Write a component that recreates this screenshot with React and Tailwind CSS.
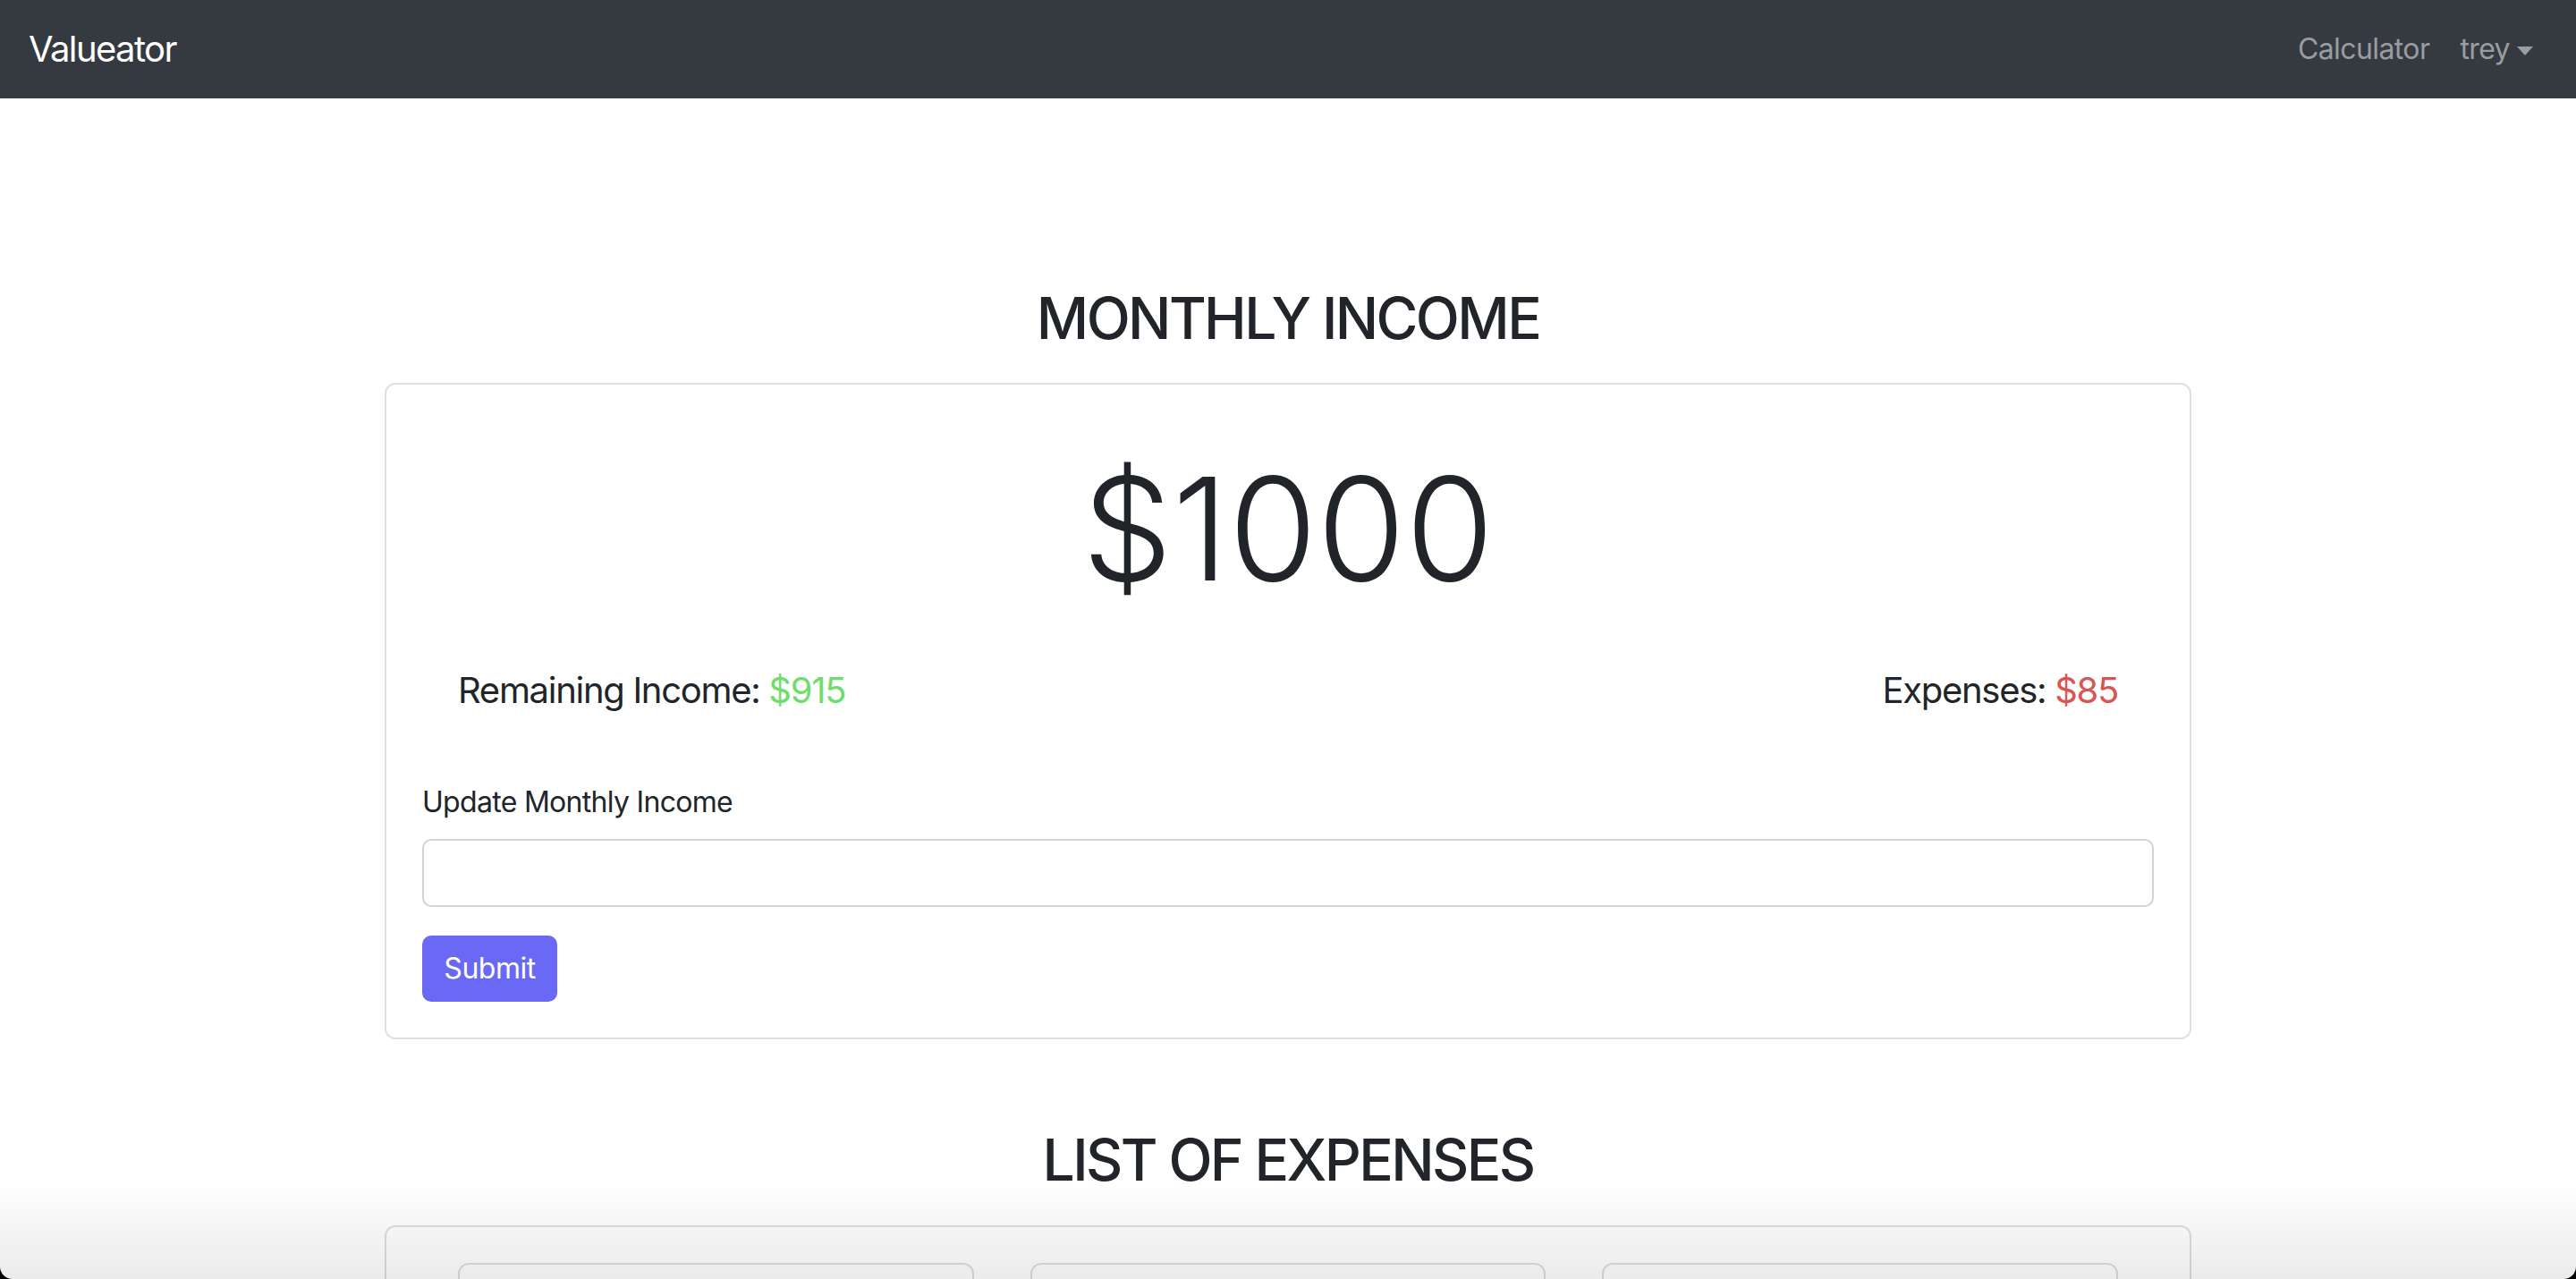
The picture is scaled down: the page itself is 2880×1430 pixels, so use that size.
const FONT = "font-['Inter','Helvetica_Neue',Arial,sans-serif]";

const Navbar = () => (
  <nav className="h-[110px] bg-[#343a40] flex items-center justify-between pl-[32px] pr-[48px]">
    <a className="text-[40px] leading-[60px] text-white tracking-[-1.6px]">Valueator</a>
    <div className="flex items-center gap-[34px] text-[32px] text-[#9a9da0] tracking-[-0.6px]">
      <a>Calculator</a>
      <a className="flex items-center">
        trey
        <span className="ml-[8px] mt-[4px] w-0 h-0 border-t-[10px] border-t-[#9a9da0] border-x-[9px] border-x-transparent" />
      </a>
    </div>
  </nav>
);

const Heading = ({ children, className = "" }) => (
  <h2 className={`text-center text-[64px] leading-[77px] font-medium tracking-[-2.6px] text-[#212529] ${className}`}>
    {children}
  </h2>
);

export default function App() {
  return (
    <div className={`${FONT} min-h-screen bg-white text-[#212529]`}>
      <Navbar />

      <main className="w-[2020px] mx-auto">
        {/* Monthly income */}
        <Heading className="mt-[207px] mb-[34px]">MONTHLY INCOME</Heading>
        <div className="border-2 border-[#dfdfdf] rounded-[12px] p-[40px]">
          <div className="mt-[25px] text-center text-[160px] leading-[192px] font-light">
            $1000
          </div>
          <div className="mt-[61px] px-[40px] flex justify-between text-[40px] leading-[48px] tracking-[-1.3px]">
            <span>
              Remaining Income: <span className="text-[#6fdd6a]">$915</span>
            </span>
            <span>
              Expenses: <span className="text-[#da5552]">$85</span>
            </span>
          </div>

          <label className="block mt-[77px] mb-[17px] text-[32px] leading-[48px] tracking-[-0.7px]">
            Update Monthly Income
          </label>
          <input
            type="text"
            className="block w-full h-[76px] border-2 border-[#ced4da] rounded-[10px] px-[24px] text-[32px] outline-none"
          />
          <button className="mt-[32px] w-[151px] h-[74px] rounded-[10px] bg-[#6a69f5] text-white text-[32px] tracking-[-0.5px]">
            Submit
          </button>
        </div>

        {/* Expenses */}
        <Heading className="mt-[96px] mb-[35px]">LIST OF EXPENSES</Heading>
        <div className="border-2 border-[#dfdfdf] rounded-[12px] p-[40px]">
          <div className="px-[40px] grid grid-cols-3 gap-[63px]">
            {[0, 1, 2].map((i) => (
              <div
                key={i}
                className="h-[420px] border-2 border-[#dfdfdf] rounded-[12px]"
              />
            ))}
          </div>
        </div>
        <div className="h-[120px]" />
      </main>

      {/* window bottom edge */}
      <div className="fixed inset-x-0 bottom-0 h-[110px] pointer-events-none bg-linear-to-b from-black/0 to-black/[0.08]" />
      <div className="fixed inset-0 pointer-events-none rounded-b-[14px] shadow-[0_0_0_40px_#000]" />
    </div>
  );
}
